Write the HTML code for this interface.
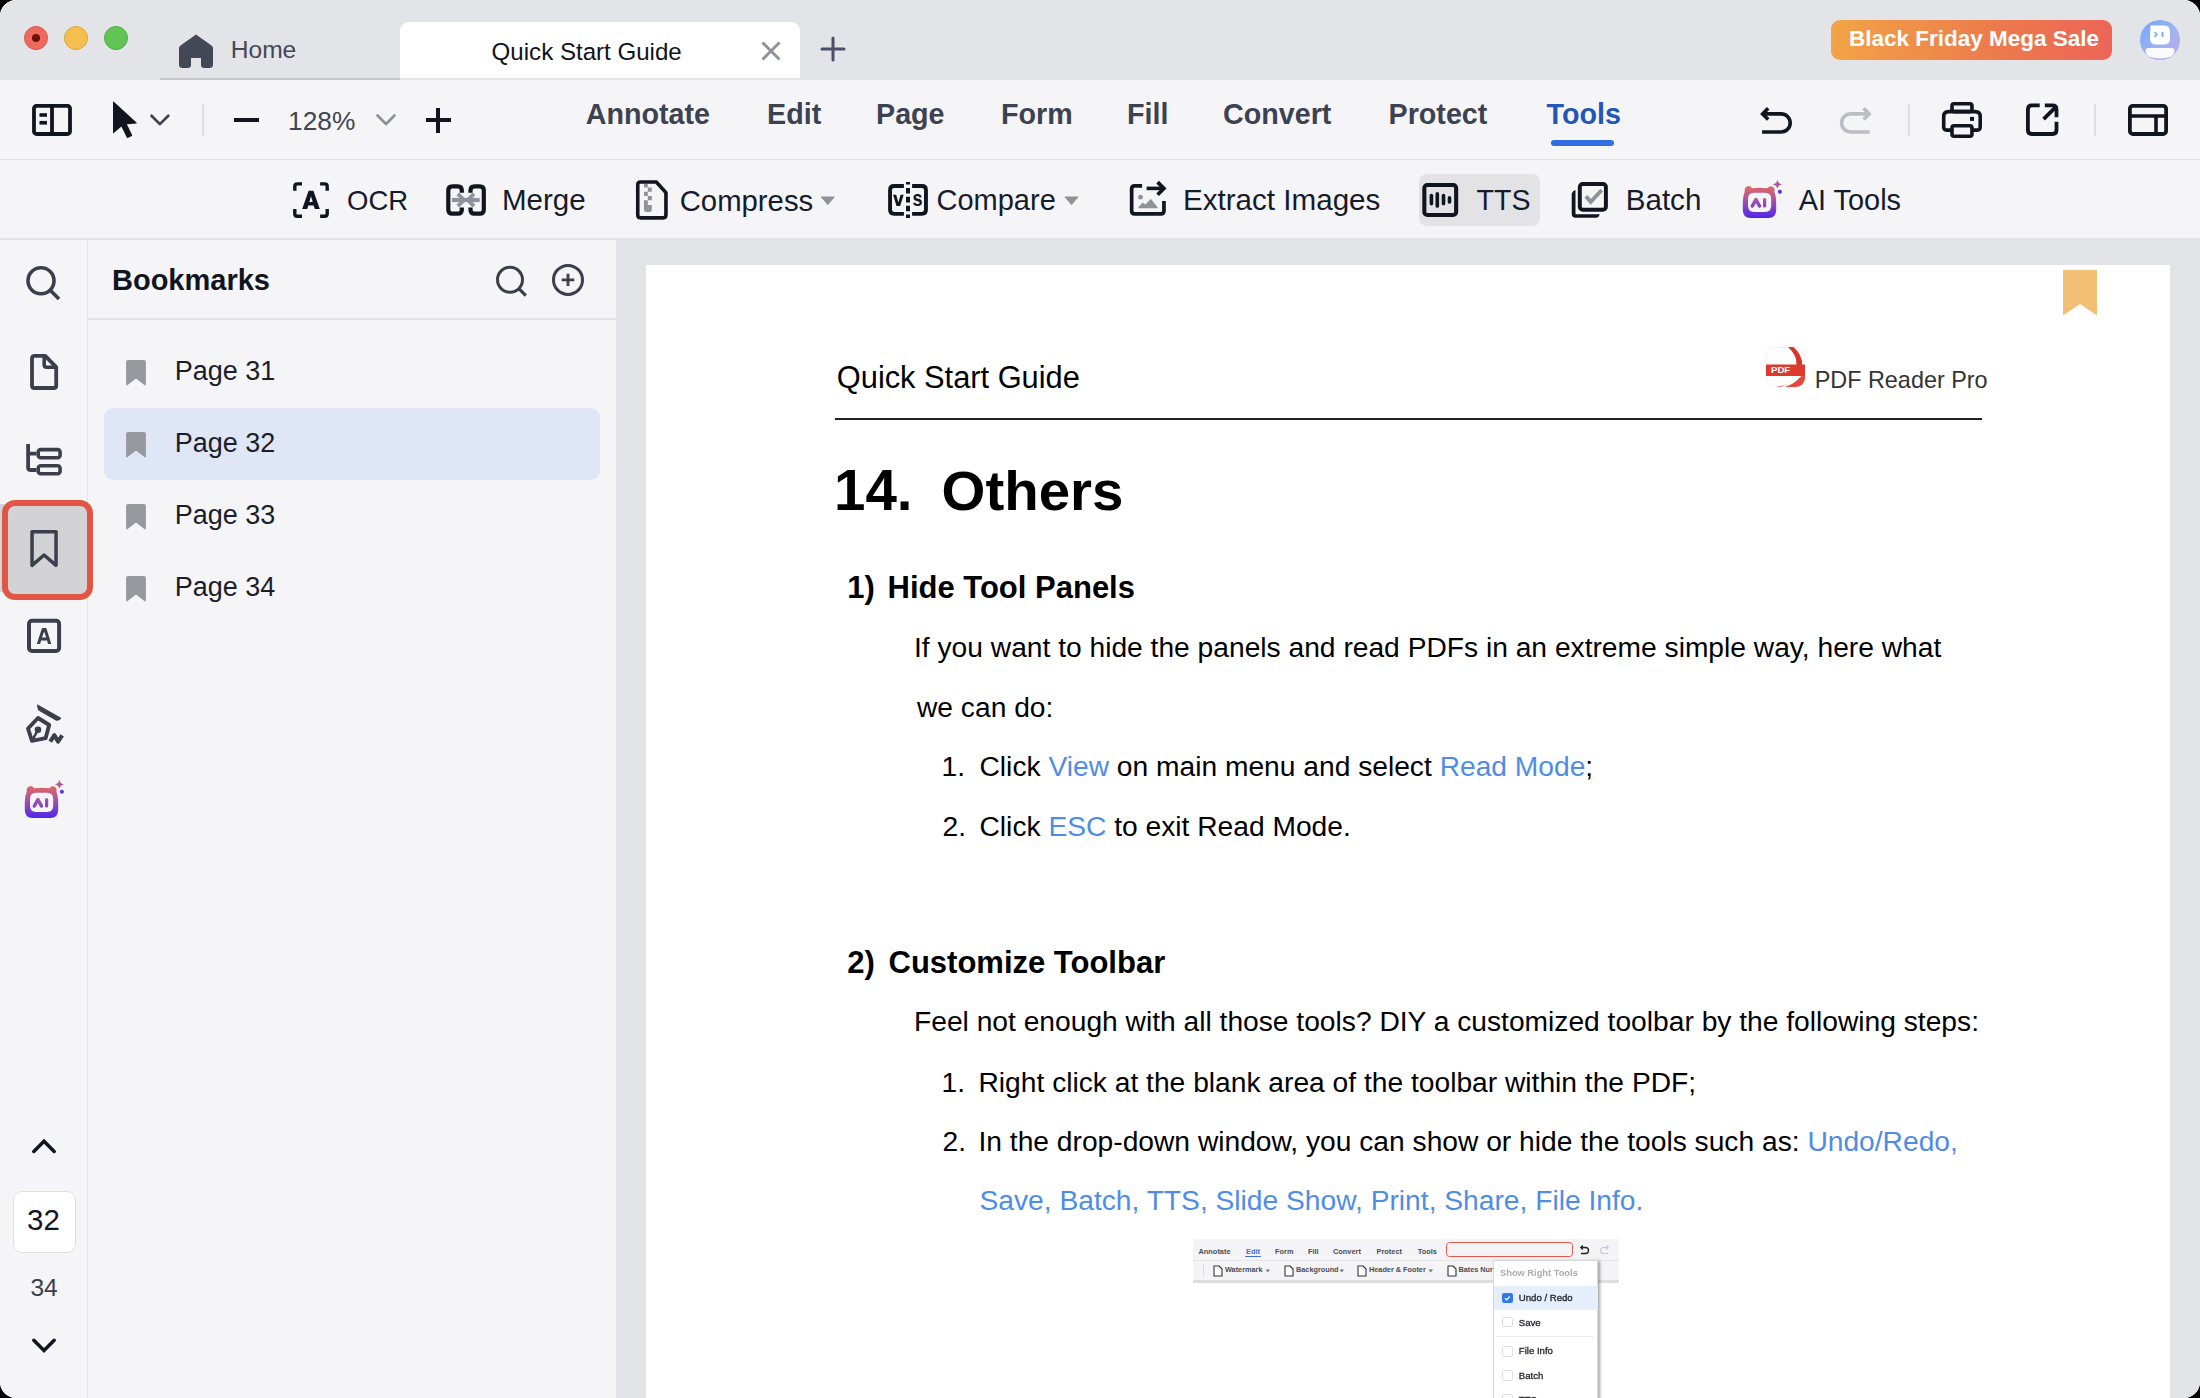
<!DOCTYPE html>
<html><head><meta charset="utf-8"><style>
html,body{margin:0;padding:0;background:#000;width:2200px;height:1398px;overflow:hidden}
#win{position:absolute;left:0;top:0;width:2200px;height:1398px;border-radius:16px;overflow:hidden;background:#f5f5f8;font-family:"Liberation Sans",sans-serif}
.t{position:absolute;white-space:pre;line-height:1;font-family:"Liberation Sans",sans-serif}
svg{overflow:visible}
</style></head><body><div id="win">
<div style="position:absolute;left:0px;top:0px;width:2200px;height:80px;background:#e3e4e7"></div>
<div style="position:absolute;left:24px;top:26px;width:24px;height:24px;border-radius:50%;background:#ee6a5e;box-sizing:border-box;border:1px solid #d9574b"></div>
<div style="position:absolute;left:64px;top:26px;width:24px;height:24px;border-radius:50%;background:#f5bf4f;box-sizing:border-box;border:1px solid #dba53a"></div>
<div style="position:absolute;left:104px;top:26px;width:24px;height:24px;border-radius:50%;background:#61c454;box-sizing:border-box;border:1px solid #4fae43"></div>
<div style="position:absolute;left:32px;top:34px;width:8px;height:8px;border-radius:50%;background:#6e1009"></div>
<div style="position:absolute;left:160px;top:78px;width:240px;height:2px;background:#c6c7cb"></div>
<svg style="position:absolute;left:179px;top:34px;" width="34" height="34" viewBox="0 0 34 34"><path d="M17 0.5 L32.5 11.5 Q34 12.6 34 14.5 V30.5 Q34 34 30.5 34 H25.5 Q22 34 22 31 V24 H12 V31 Q12 34 8.5 34 H3.5 Q0 34 0 30.5 V14.5 Q0 12.6 1.5 11.5 Z" fill="#434857"/></svg>
<div style="position:absolute;left:400px;top:22px;width:400px;height:56px;background:#fff;border-radius:9px 9px 0 0"></div>
<div style="position:absolute;left:400px;top:78px;width:400px;height:2px;background:#e6e6e9"></div>
<svg style="position:absolute;left:760px;top:40px;" width="22" height="22" viewBox="0 0 22 22"><path d="M2.5 2.5 L19.5 19.5 M19.5 2.5 L2.5 19.5" stroke="#8e9297" stroke-width="2.9"/></svg>
<svg style="position:absolute;left:819px;top:35px;" width="28" height="28" viewBox="0 0 28 28"><path d="M14 3 V25 M3 14 H25" stroke="#4b506a" stroke-width="3" stroke-linecap="round"/></svg>
<div style="position:absolute;left:1831px;top:20px;width:281px;height:40px;border-radius:9px;background:linear-gradient(90deg,#f2a446,#ec7a4c 60%,#ec6558)"></div>
<div style="position:absolute;left:2140px;top:20px;width:40px;height:40px;border-radius:50%;background:linear-gradient(135deg,#6ea8f6,#9fb2f2 55%,#c3a6ee)"></div>
<svg style="position:absolute;left:2140px;top:20px;" width="40" height="40" viewBox="0 0 40 40"><path d="M10.5 5.5 H24 Q30 5.5 30 11.5 V18.5 Q30 24.5 24 24.5 H16 Q10 24.5 10 18.5 Z" fill="#fff"/><path d="M14.5 12 L17 14.5 L14.5 17" fill="none" stroke="#7aa6f2" stroke-width="1.6"/><rect x="21.5" y="12" width="2" height="5" rx="1" fill="#7aa6f2"/><path d="M8 28 H32 Q34.5 28 34.5 31 Q34.5 38 20 38.5 Q5.5 38 5.5 31 Q5.5 28 8 28 Z" fill="#fff" opacity="0.95"/></svg>
<div style="position:absolute;left:0px;top:80px;width:2200px;height:79px;background:#f5f5f8"></div>
<div style="position:absolute;left:0px;top:159px;width:2200px;height:1px;background:#e1e2e5"></div>
<svg style="position:absolute;left:25px;top:95px;" width="50" height="50" viewBox="0 0 50 50"><rect x="9" y="10.8" width="36" height="28.2" rx="2.5" fill="none" stroke="#11151f" stroke-width="3.8"/><rect x="25.1" y="10" width="3.8" height="30" fill="#11151f"/><rect x="14.5" y="18.2" width="7.5" height="3.6" fill="#11151f"/><rect x="14.5" y="25.9" width="7.5" height="3.7" fill="#11151f"/></svg>
<svg style="position:absolute;left:25px;top:95px;" width="150" height="50" viewBox="0 0 150 50"><path d="M88 7 V37.6 Q88 38.5 88.8 37.9 L96.4 31.6 L101.8 42.6 Q102.1 43.2 102.7 42.9 L106.9 40.9 Q107.4 40.6 107.1 40 L101.9 29.3 L111.3 28.4 Q112.3 28.2 111.5 27.5 L88.6 6.6 Q88 6.2 88 7 Z" fill="#11151f"/><path d="M126.5 20.7 L134.9 29.1 L143.3 20.7" fill="none" stroke="#3d4250" stroke-width="2.7" stroke-linecap="round" stroke-linejoin="round"/></svg>
<div style="position:absolute;left:202px;top:104px;width:2px;height:32px;background:#dcdde0"></div>
<div style="position:absolute;left:233.5px;top:118px;width:25px;height:4px;background:#11151f"></div>
<svg style="position:absolute;left:374px;top:111px;" width="24" height="18" viewBox="0 0 24 18"><path d="M3.5 4.5 L12 13 L20.5 4.5" fill="none" stroke="#8a8e96" stroke-width="2.6" stroke-linecap="round" stroke-linejoin="round"/></svg>
<div style="position:absolute;left:425.5px;top:118px;width:25px;height:4px;background:#11151f"></div>
<div style="position:absolute;left:436px;top:107.5px;width:4px;height:25px;background:#11151f"></div>
<div style="position:absolute;left:1551px;top:140px;width:63px;height:6px;background:#2f6fe3;border-radius:3px"></div>
<svg style="position:absolute;left:1750px;top:95px;" width="130" height="50" viewBox="0 0 130 50"><path d="M12.1 37 H31.15 A9.05 9.05 0 0 0 31.15 18.9 H13" fill="none" stroke="#11151f" stroke-width="3.6"/><path d="M18.2 13.3 L12.6 18.9 L18.2 24.5" fill="none" stroke="#11151f" stroke-width="3.6" stroke-linejoin="miter"/><path d="M119.7 37 H100.65 A9.05 9.05 0 0 1 100.65 18.9 H118.8" fill="none" stroke="#bcbec3" stroke-width="3.6"/><path d="M113.6 13.3 L119.2 18.9 L113.6 24.5" fill="none" stroke="#bcbec3" stroke-width="3.6"/></svg>
<div style="position:absolute;left:1908px;top:104px;width:2px;height:32px;background:#dcdde0"></div>
<svg style="position:absolute;left:1930px;top:95px;" width="250" height="50" viewBox="0 0 250 50"><rect x="22" y="8.8" width="19.95" height="7.8" rx="2" fill="none" stroke="#11151f" stroke-width="3.6"/><path d="M22 35.1 H16.7 Q13.7 35.1 13.7 32.1 V21.6 Q13.7 16.6 18.7 16.6 H45.2 Q50.2 16.6 50.2 21.6 V32.1 Q50.2 35.1 47.2 35.1 H42" fill="none" stroke="#11151f" stroke-width="3.6"/><rect x="22" y="30.8" width="19.95" height="10.4" rx="2" fill="none" stroke="#11151f" stroke-width="3.6"/><rect x="40" y="21.9" width="4" height="4" fill="#11151f"/><path d="M109.7 10.4 H101.9 Q97.9 10.4 97.9 14.4 V35 Q97.9 39 101.9 39 H122.5 Q126.5 39 126.5 35 V26.7" fill="none" stroke="#11151f" stroke-width="3.8"/><path d="M114.8 10.4 H122.5 Q126.5 10.4 126.5 14.4 V22.2" fill="none" stroke="#11151f" stroke-width="3.8"/><path d="M113.6 24.2 L125.4 12.4" stroke="#11151f" stroke-width="3.8"/><rect x="199.9" y="10.8" width="36.2" height="28.2" rx="3" fill="none" stroke="#11151f" stroke-width="3.8"/><path d="M200 21 H236 M226 21 V39" stroke="#11151f" stroke-width="3.6"/></svg>
<div style="position:absolute;left:2094px;top:104px;width:2px;height:32px;background:#dcdde0"></div>
<div style="position:absolute;left:0px;top:160px;width:2200px;height:78px;background:#f5f5f8"></div>
<div style="position:absolute;left:0px;top:238px;width:2200px;height:2px;background:#e1e2e5"></div>
<svg style="position:absolute;left:285px;top:175px;" width="210" height="50" viewBox="0 0 210 50"><path d="M9.8 15.75 V11.4 Q9.8 8.9 12.3 8.9 H17 M35.1 8.9 H39.7 Q42.2 8.9 42.2 11.4 V15.75 M42.2 33.9 V38.8 Q42.2 41.3 39.7 41.3 H35.1 M17 41.3 H12.3 Q9.8 41.3 9.8 38.8 V33.9" fill="none" stroke="#11151f" stroke-width="3.4"/><path fill-rule="evenodd" d="M17.2 33.9 L23.6 15.8 H28.4 L34.8 33.9 H29.8 L28.7 30.4 H23.3 L22.2 33.9 Z M24.3 26.9 H27.7 L26 21.2 Z" fill="#11151f"/><path d="M176.8 17.7 V15.3 Q176.8 11.3 172.8 11.3 H167.3 Q163.3 11.3 163.3 15.3 V34.7 Q163.3 38.7 167.3 38.7 H172.8 Q176.8 38.7 176.8 34.7 V32.5 M185.5 17.7 V15.3 Q185.5 11.3 189.5 11.3 H194.8 Q198.8 11.3 198.8 15.3 V34.7 Q198.8 38.7 194.8 38.7 H189.5 Q185.5 38.7 185.5 34.7 V32.5" fill="none" stroke="#11151f" stroke-width="4.2"/><path d="M167 25 H194.7" stroke="#8f9298" stroke-width="4.2"/><path d="M172.8 18.9 L179 25 L172.8 31.1 M189 18.9 L182.8 25 L189 31.1" fill="none" stroke="#8f9298" stroke-width="3.8"/></svg>
<svg style="position:absolute;left:625px;top:172px;" width="310" height="56" viewBox="0 0 310 56"><path d="M15.5 9.95 H31.3 L40.95 20.6 V43 Q40.95 45.85 38.1 45.85 H15.6 Q12.75 45.85 12.75 43 V12.8 Q12.75 9.95 15.5 9.95 Z" fill="none" stroke="#11151f" stroke-width="3.6" stroke-linejoin="round"/><path d="M19 12 h3.8 v3.5 h-3.8z M22.8 15.5 h4 v4.2 h-4z M19 19.7 h3.8 v4.3 h-3.8z M22.8 24 h4 v4.2 h-4z M19 28.2 h3.8 v4.8 h4 v4.4 q0 2.5 -2.5 2.5 h-2.8 q-2.5 0 -2.5 -2.5z" fill="#8f9298"/><path d="M196.4 24.6 H209.2 Q210 24.6 209.5 25.3 L203.4 32.6 Q202.8 33.2 202.2 32.6 L196.1 25.3 Q195.6 24.6 196.4 24.6 Z" fill="#8f9298"/></svg>
<svg style="position:absolute;left:884px;top:178px;" width="50" height="44" viewBox="0 0 50 44"><path d="M19.9 7.95 H10.05 Q6.05 7.95 6.05 11.95 V31.85 Q6.05 35.85 10.05 35.85 H19.9 M28.1 7.95 H37.95 Q41.95 7.95 41.95 11.95 V31.85 Q41.95 35.85 37.95 35.85 H28.1" fill="none" stroke="#11151f" stroke-width="3.9"/><path d="M24 3.9 V40" stroke="#11151f" stroke-width="4" stroke-dasharray="5.6 3.3" stroke-dashoffset="2.9"/><path d="M9.1 16.8 H12.2 L14.3 24.6 L16.6 16.8 H19.7 L16.1 27.9 H12.5 Z" fill="#11151f"/><text x="0" y="0" transform="translate(28.6 28.1) scale(0.82 1)" font-family="Liberation Sans" font-weight="bold" font-size="22" fill="#11151f">s</text></svg>
<svg style="position:absolute;left:1055px;top:172px;" width="30" height="56" viewBox="0 0 30 56"><path d="M10.1 24.6 H22.9 Q23.7 24.6 23.2 25.3 L17.1 32.6 Q16.5 33.2 15.9 32.6 L9.8 25.3 Q9.3 24.6 10.1 24.6 Z" fill="#8f9298"/></svg>
<svg style="position:absolute;left:1120px;top:172px;" width="60" height="56" viewBox="0 0 60 56"><path d="M22.1 13.95 H14.6 Q11.65 13.95 11.65 16.9 V39 Q11.65 41.95 14.6 41.95 H41 Q43.95 41.95 43.95 39 V29" fill="none" stroke="#11151f" stroke-width="3.7"/><path d="M26.6 16.4 H43" stroke="#11151f" stroke-width="3.6"/><path d="M37.6 10.1 L43.9 16.4 L37.6 22.7" fill="none" stroke="#11151f" stroke-width="3.7"/><circle cx="20.5" cy="25.2" r="2.4" fill="#8f9298"/><path d="M18.7 36.3 Q17.6 36.3 18.3 35.4 L22.5 30.5 L25.4 32.5 L30.4 27.3 Q30.8 26.9 31.2 27.3 L37.5 35.3 Q38.1 36.3 37 36.3 Z" fill="#8f9298"/></svg>
<div style="position:absolute;left:1418.6px;top:174px;width:121.4px;height:51.6px;background:#e3e3e6;border-radius:8px"></div>
<svg style="position:absolute;left:1415px;top:172px;" width="200" height="56" viewBox="0 0 200 56"><rect x="9.35" y="12.95" width="31.8" height="30" rx="3" fill="none" stroke="#11151f" stroke-width="4.1"/><path d="M16.4 23.6 V31.8 M22.3 21.8 V34.1 M28.5 23.6 V31.8 M34.5 25.8 V30" stroke="#11151f" stroke-width="3.6" stroke-linecap="round"/><path d="M156.7 21.4 Q157.6 18.7 160.5 18.1 V42.2 H184.9 Q184 45.2 181.4 45.8 H160.7 Q156.7 45.8 156.7 41.8 Z" fill="#11151f"/><rect x="164.8" y="11.9" width="26.1" height="25.8" rx="3" fill="none" stroke="#11151f" stroke-width="3.95"/><path d="M170.9 24.2 L175.7 29.8 L186.7 18.1" fill="none" stroke="#8f9298" stroke-width="3.8"/></svg>
<svg style="position:absolute;left:1735px;top:172px" width="50" height="50" viewBox="0 0 50 50"><defs><linearGradient id="aig1" x1="0" y1="14" x2="0" y2="46" gradientUnits="userSpaceOnUse"><stop offset="0" stop-color="#e2685c"/><stop offset="0.45" stop-color="#a352ad"/><stop offset="1" stop-color="#4d27ea"/></linearGradient><linearGradient id="aig1s" x1="0" y1="8" x2="0" y2="21" gradientUnits="userSpaceOnUse"><stop offset="0" stop-color="#d2607f"/><stop offset="1" stop-color="#5a30e6"/></linearGradient></defs><path fill-rule="evenodd" fill="url(#aig1)" d="M12.8 14.2 Q15.5 13.5 17 16.2 Q24.5 15.4 32.5 16.2 Q34.2 13.5 37 14.4 Q40.5 15.8 39.4 19.6 Q41.2 24 41.2 30 V38 Q41.2 45.9 33.4 45.9 H15.6 Q7.8 45.9 7.8 38 V30 Q7.8 24 9.8 19.6 Q8.8 15.5 12.8 14.2 Z M19.2 20.8 H30 Q36.2 20.8 36.2 27 V33.8 Q36.2 40 30 40 H19.2 Q13 40 13 33.8 V27 Q13 20.8 19.2 20.8 Z"/><path d="M17.3 34 L20.9 27.6 L24.5 34" fill="none" stroke="url(#aig1)" stroke-width="3.5" stroke-linecap="round" stroke-linejoin="round"/><path d="M29.6 27.6 V34" stroke="url(#aig1)" stroke-width="3.2" stroke-linecap="round"/><path d="M42.4 7.8 Q43 11.8 47 12.4 Q43 13 42.4 16.8 Q41.8 13 37.8 12.4 Q41.8 11.8 42.4 7.8 Z" fill="#b05a9c"/><circle cx="44.9" cy="19.8" r="2" fill="#5a30e6"/></svg>
<div style="position:absolute;left:88px;top:240px;width:528px;height:1158px;background:#f5f5f8"></div>
<div style="position:absolute;left:88px;top:318px;width:528px;height:2px;background:#e2e3e6"></div>
<div style="position:absolute;left:0px;top:240px;width:87px;height:1158px;background:#f5f5f8"></div>
<div style="position:absolute;left:86.5px;top:240px;width:1.3px;height:1158px;background:#e2e3e6"></div>
<svg style="position:absolute;left:15px;top:255px;" width="60" height="230" viewBox="0 0 60 230"><circle cx="26" cy="25.75" r="13" fill="none" stroke="#3b3f4c" stroke-width="3.6"/><path d="M35.3 35.3 L44 44" stroke="#3b3f4c" stroke-width="3.6"/><path d="M17 103.5 Q17 100.9 19.6 100.9 H30.2 L41.2 112.2 V130.4 Q41.2 133 38.6 133 H19.6 Q17 133 17 130.4 Z" fill="none" stroke="#3b3f4c" stroke-width="3.8" stroke-linejoin="round"/><path d="M29.2 101 V109.8 Q29.2 112.2 31.6 112.2 H41" fill="none" stroke="#3b3f4c" stroke-width="3.6"/><path d="M13.1 188.9 V212.8 Q13.1 215 15.3 215 H21.4 M13.1 198.7 H21.4" fill="none" stroke="#3b3f4c" stroke-width="3.8"/><rect x="23.2" y="194.6" width="21.9" height="8.1" rx="2.5" fill="none" stroke="#3b3f4c" stroke-width="3.6"/><rect x="23.2" y="210.8" width="21.9" height="7.9" rx="2.5" fill="none" stroke="#3b3f4c" stroke-width="3.6"/></svg>
<div style="position:absolute;left:0px;top:504px;width:20px;height:88px;background:#d3d3d6"></div>
<div style="position:absolute;left:2.2px;top:499.6px;width:90.6px;height:100px;background:#d3d3d6;border:6px solid #e15545;border-radius:13px;box-sizing:border-box"></div>
<svg style="position:absolute;left:15px;top:520px;" width="60" height="310" viewBox="0 0 60 310"><path d="M17.05 11.75 H41.05 V45.3 L29.05 35 L17.05 45.3 Z" fill="none" stroke="#3b3f4c" stroke-width="3.5" stroke-linejoin="round"/></svg>
<svg style="position:absolute;left:20px;top:610px;" width="60" height="150" viewBox="0 0 60 150"><rect x="9" y="10.8" width="30.1" height="30.1" rx="3" fill="none" stroke="#3b3f4c" stroke-width="4"/><path fill-rule="evenodd" d="M16.8 34.1 L22 18 H26.3 L31.3 34.1 H28 L27.1 30.6 H21.1 L20.1 34.1 Z M22 27.6 H26.2 L24.1 21.4 Z" fill="#3b3f4c"/><path d="M17.2 94.2 L40.6 107.4 Q41.6 108 40.6 109.2 Q38.6 111.2 35.8 110.5 L20.2 101.6 Q17.2 99.9 17.2 97 Z" fill="#3b3f4c"/><path d="M8 118.5 L18 108 L29.2 115 L25.6 128.2 L12 130.8 Z" fill="none" stroke="#3b3f4c" stroke-width="3.9" stroke-linejoin="round"/><circle cx="18" cy="119.7" r="3.3" fill="#3b3f4c"/><path d="M18 119.7 L12.5 130" stroke="#3b3f4c" stroke-width="2.6"/><path d="M30.2 131.6 L34.4 125.2 L38 131.6 L42.2 125.4" fill="none" stroke="#3b3f4c" stroke-width="4.1" stroke-linejoin="round" stroke-linecap="butt"/></svg>
<svg style="position:absolute;left:17.2px;top:772.2px" width="50" height="50" viewBox="0 0 50 50"><defs><linearGradient id="aig2" x1="0" y1="14" x2="0" y2="46" gradientUnits="userSpaceOnUse"><stop offset="0" stop-color="#e2685c"/><stop offset="0.45" stop-color="#a352ad"/><stop offset="1" stop-color="#4d27ea"/></linearGradient><linearGradient id="aig2s" x1="0" y1="8" x2="0" y2="21" gradientUnits="userSpaceOnUse"><stop offset="0" stop-color="#d2607f"/><stop offset="1" stop-color="#5a30e6"/></linearGradient></defs><path fill-rule="evenodd" fill="url(#aig2)" d="M12.8 14.2 Q15.5 13.5 17 16.2 Q24.5 15.4 32.5 16.2 Q34.2 13.5 37 14.4 Q40.5 15.8 39.4 19.6 Q41.2 24 41.2 30 V38 Q41.2 45.9 33.4 45.9 H15.6 Q7.8 45.9 7.8 38 V30 Q7.8 24 9.8 19.6 Q8.8 15.5 12.8 14.2 Z M19.2 20.8 H30 Q36.2 20.8 36.2 27 V33.8 Q36.2 40 30 40 H19.2 Q13 40 13 33.8 V27 Q13 20.8 19.2 20.8 Z"/><path d="M17.3 34 L20.9 27.6 L24.5 34" fill="none" stroke="url(#aig2)" stroke-width="3.5" stroke-linecap="round" stroke-linejoin="round"/><path d="M29.6 27.6 V34" stroke="url(#aig2)" stroke-width="3.2" stroke-linecap="round"/><path d="M42.4 7.8 Q43 11.8 47 12.4 Q43 13 42.4 16.8 Q41.8 13 37.8 12.4 Q41.8 11.8 42.4 7.8 Z" fill="#b05a9c"/><circle cx="44.9" cy="19.8" r="2" fill="#5a30e6"/></svg>
<svg style="position:absolute;left:28px;top:1133px;" width="32" height="26" viewBox="0 0 32 26"><path d="M5.8 18.4 L16 8.2 L26.2 18.4" fill="none" stroke="#11151f" stroke-width="3.5" stroke-linecap="round"/></svg>
<div style="position:absolute;left:12.5px;top:1190.5px;width:63px;height:62.5px;background:#fff;border:1.5px solid #e0e0e4;border-radius:9px;box-sizing:border-box"></div>
<svg style="position:absolute;left:28px;top:1332px;" width="32" height="26" viewBox="0 0 32 26"><path d="M5.8 8.3 L16 18.5 L26.2 8.3" fill="none" stroke="#11151f" stroke-width="3.5" stroke-linecap="round"/></svg>
<svg style="position:absolute;left:485px;top:255px;" width="110" height="50" viewBox="0 0 110 50"><circle cx="25" cy="24.75" r="12.5" fill="none" stroke="#3b3f4c" stroke-width="3"/><path d="M33.9 33.7 L40.8 40.6" stroke="#3b3f4c" stroke-width="3.2"/><circle cx="83" cy="24.9" r="14.5" fill="none" stroke="#3b3f4c" stroke-width="3"/><path d="M83 18.75 V31 M76.75 24.9 H89.25" stroke="#3b3f4c" stroke-width="2.8"/></svg>
<div style="position:absolute;left:104px;top:408px;width:496px;height:72px;background:#dfe6f6;border-radius:9px"></div>
<svg style="position:absolute;left:115px;top:350px;" width="50" height="50" viewBox="0 0 50 50"><path d="M11.1 12 Q11.1 10 13.1 10 H28.9 Q30.9 10 30.9 12 V34.5 Q30.9 36.3 29.4 35.1 L21 28.6 L12.6 35.1 Q11.1 36.3 11.1 34.5 Z" fill="#95989d"/></svg>
<svg style="position:absolute;left:115px;top:422px;" width="50" height="50" viewBox="0 0 50 50"><path d="M11.1 12 Q11.1 10 13.1 10 H28.9 Q30.9 10 30.9 12 V34.5 Q30.9 36.3 29.4 35.1 L21 28.6 L12.6 35.1 Q11.1 36.3 11.1 34.5 Z" fill="#95989d"/></svg>
<svg style="position:absolute;left:115px;top:494px;" width="50" height="50" viewBox="0 0 50 50"><path d="M11.1 12 Q11.1 10 13.1 10 H28.9 Q30.9 10 30.9 12 V34.5 Q30.9 36.3 29.4 35.1 L21 28.6 L12.6 35.1 Q11.1 36.3 11.1 34.5 Z" fill="#95989d"/></svg>
<svg style="position:absolute;left:115px;top:566px;" width="50" height="50" viewBox="0 0 50 50"><path d="M11.1 12 Q11.1 10 13.1 10 H28.9 Q30.9 10 30.9 12 V34.5 Q30.9 36.3 29.4 35.1 L21 28.6 L12.6 35.1 Q11.1 36.3 11.1 34.5 Z" fill="#95989d"/></svg>
<div style="position:absolute;left:616px;top:240px;width:1584px;height:1158px;background:#e3e4e7"></div>
<div style="position:absolute;left:646px;top:265px;width:1524px;height:1140px;background:#fff"></div>
<svg style="position:absolute;left:2063px;top:270px;" width="34" height="46" viewBox="0 0 34 46"><path d="M0 0 H34 V45.5 L17 34 L0 45.5 Z" fill="#f2c074"/></svg>
<svg style="position:absolute;left:1766px;top:347px" width="40" height="40" viewBox="0 0 40 40"><defs><clipPath id="lg"><rect x="0" y="0" width="39" height="40" rx="9"/></clipPath></defs><rect x="0.3" y="0.3" width="38.4" height="39.4" rx="9" fill="#fff" stroke="#e6e6e6" stroke-width="0.6"/><g clip-path="url(#lg)"><path d="M22 0 H27.5 Q37 9 36 18 H30.5 Q31 8 22 0 Z" fill="#d8352b"/><rect x="0" y="17.5" width="39" height="11.5" fill="#dc3a2f"/><path d="M8 40.5 Q28 37 35.5 29 H39 V40.5 Z" fill="#e24a3f"/><path d="M13 40.5 Q27 35.5 32 29 H34.5 Q29 37.5 17 40.5 Z" fill="#fff"/></g><text x="5" y="26.3" font-family="Liberation Sans" font-weight="bold" font-size="9.6" fill="#fff">PDF</text></svg>
<div style="position:absolute;left:835px;top:418.2px;width:1147px;height:1.7px;background:#222"></div>
<div class="t" style="left:230.70px;top:38.38px;font-size:24.6px;font-weight:normal;color:#434857;">Home</div>
<div class="t" style="left:491.60px;top:39.50px;font-size:24.1px;font-weight:normal;color:#111318;">Quick Start Guide</div>
<div class="t" style="left:1848.90px;top:28.25px;font-size:22.5px;font-weight:bold;color:#fff;">Black Friday Mega Sale</div>
<div class="t" style="left:288.00px;top:107.94px;font-size:26.3px;font-weight:normal;color:#414552;">128%</div>
<div class="t" style="left:585.70px;top:99.91px;font-size:28.7px;font-weight:bold;color:#3d4250;">Annotate</div>
<div class="t" style="left:767.00px;top:99.91px;font-size:28.7px;font-weight:bold;color:#3d4250;">Edit</div>
<div class="t" style="left:876.00px;top:99.91px;font-size:28.7px;font-weight:bold;color:#3d4250;">Page</div>
<div class="t" style="left:1001.00px;top:99.91px;font-size:28.7px;font-weight:bold;color:#3d4250;">Form</div>
<div class="t" style="left:1127.00px;top:99.91px;font-size:28.7px;font-weight:bold;color:#3d4250;">Fill</div>
<div class="t" style="left:1223.00px;top:99.91px;font-size:28.7px;font-weight:bold;color:#3d4250;">Convert</div>
<div class="t" style="left:1388.50px;top:99.91px;font-size:28.7px;font-weight:bold;color:#3d4250;">Protect</div>
<div class="t" style="left:1546.60px;top:99.91px;font-size:28.7px;font-weight:bold;color:#2456b8;">Tools</div>
<div class="t" style="left:347.00px;top:187.02px;font-size:27.5px;font-weight:normal;color:#161b2b;">OCR</div>
<div class="t" style="left:502.00px;top:185.33px;font-size:29.5px;font-weight:normal;color:#161b2b;">Merge</div>
<div class="t" style="left:679.70px;top:185.50px;font-size:29.3px;font-weight:normal;color:#161b2b;">Compress</div>
<div class="t" style="left:936.50px;top:185.75px;font-size:29px;font-weight:normal;color:#161b2b;">Compare</div>
<div class="t" style="left:1183.00px;top:185.24px;font-size:29.6px;font-weight:normal;color:#161b2b;">Extract Images</div>
<div class="t" style="left:1476.60px;top:186.09px;font-size:28.6px;font-weight:normal;color:#161b2b;">TTS</div>
<div class="t" style="left:1625.70px;top:185.24px;font-size:29.6px;font-weight:normal;color:#161b2b;">Batch</div>
<div class="t" style="left:1798.80px;top:185.84px;font-size:28.9px;font-weight:normal;color:#161b2b;">AI Tools</div>
<div class="t" style="left:27.00px;top:1205.03px;font-size:29.5px;font-weight:normal;color:#11151f;">32</div>
<div class="t" style="left:30.40px;top:1275.76px;font-size:24.5px;font-weight:normal;color:#3b3f4c;">34</div>
<div class="t" style="left:112.00px;top:266.15px;font-size:29px;font-weight:bold;color:#11151f;">Bookmarks</div>
<div class="t" style="left:174.80px;top:358.14px;font-size:27px;font-weight:normal;color:#1a1e2a;">Page 31</div>
<div class="t" style="left:174.80px;top:430.14px;font-size:27px;font-weight:normal;color:#1a1e2a;">Page 32</div>
<div class="t" style="left:174.80px;top:502.14px;font-size:27px;font-weight:normal;color:#1a1e2a;">Page 33</div>
<div class="t" style="left:174.80px;top:574.14px;font-size:27px;font-weight:normal;color:#1a1e2a;">Page 34</div>
<div class="t" style="left:836.80px;top:362.93px;font-size:30.8px;font-weight:normal;color:#000;">Quick Start Guide</div>
<div class="t" style="left:1814.70px;top:368.89px;font-size:23.4px;font-weight:normal;color:#333333;">PDF Reader Pro</div>
<div class="t" style="left:834.00px;top:463.17px;font-size:56.5px;font-weight:bold;color:#000;">14.</div>
<div class="t" style="left:941.60px;top:463.26px;font-size:56.4px;font-weight:bold;color:#000;">Others</div>
<div class="t" style="left:847.20px;top:572.36px;font-size:31px;font-weight:bold;color:#000;">1)</div>
<div class="t" style="left:887.50px;top:572.36px;font-size:31px;font-weight:bold;color:#000;">Hide Tool Panels</div>
<div class="t" style="left:941.60px;top:752.13px;font-size:28.2px;font-weight:normal;color:#000;">1.</div>
<div class="t" style="left:942.60px;top:811.83px;font-size:28.2px;font-weight:normal;color:#000;">2.</div>
<div class="t" style="left:847.20px;top:946.76px;font-size:31px;font-weight:bold;color:#000;">2)</div>
<div class="t" style="left:888.50px;top:946.76px;font-size:31px;font-weight:bold;color:#000;">Customize Toolbar</div>
<div class="t" style="left:941.60px;top:1067.53px;font-size:28.2px;font-weight:normal;color:#000;">1.</div>
<div class="t" style="left:942.60px;top:1126.63px;font-size:28.2px;font-weight:normal;color:#000;">2.</div>
<div class="t" style="left:914.00px;top:632.73px;font-size:28.2px"><span style="color:#000">If you want to hide the panels and read PDFs in an extreme simple way, here what</span></div>
<div class="t" style="left:917.00px;top:692.53px;font-size:28.2px"><span style="color:#000">we can do:</span></div>
<div class="t" style="left:979.50px;top:752.13px;font-size:28.2px"><span style="color:#000">Click </span><span style="color:#4f8ce6">View</span><span style="color:#000"> on main menu and select </span><span style="color:#4f8ce6">Read Mode</span><span style="color:#000">;</span></div>
<div class="t" style="left:979.50px;top:811.83px;font-size:28.2px"><span style="color:#000">Click </span><span style="color:#4f8ce6">ESC</span><span style="color:#000"> to exit Read Mode.</span></div>
<div class="t" style="left:914.00px;top:1006.83px;font-size:28.2px"><span style="color:#000">Feel not enough with all those tools? DIY a customized toolbar by the following steps:</span></div>
<div class="t" style="left:978.50px;top:1067.53px;font-size:28.2px"><span style="color:#000">Right click at the blank area of the toolbar within the PDF;</span></div>
<div class="t" style="left:978.50px;top:1126.63px;font-size:28.2px"><span style="color:#000">In the drop-down window, you can show or hide the tools such as: </span><span style="color:#4f8ce6">Undo/Redo,</span></div>
<div class="t" style="left:979.50px;top:1186.13px;font-size:28.2px"><span style="color:#4f8ce6">Save, Batch, TTS, Slide Show, Print, Share, File Info.</span></div>
<div id="emb" style="position:absolute;left:0;top:0;width:2200px;height:1398px;filter:blur(0.35px)">
<div style="position:absolute;left:1193px;top:1239px;width:426px;height:20.5px;background:#f4f4f6"></div>
<div style="position:absolute;left:1193px;top:1259.5px;width:426px;height:1px;background:#e6e6e9"></div>
<div style="position:absolute;left:1193px;top:1260.5px;width:426px;height:19.5px;background:#f4f4f6"></div>
<div style="position:absolute;left:1193px;top:1280px;width:426px;height:3px;background:#dedee1"></div>
<div style="position:absolute;left:1245px;top:1255.5px;width:16px;height:1.6px;background:#3d6fd8;border-radius:1px"></div>
<div style="position:absolute;left:1445.8px;top:1242.1px;width:127px;height:15.4px;border:1.8px solid #e8574a;border-radius:3.5px;box-sizing:border-box"></div>
<svg style="position:absolute;left:1578px;top:1244px;" width="34" height="12" viewBox="0 0 34 12"><path d="M3 9.5 H7.5 A3 3 0 0 0 7.5 3.5 H3 M4.8 1.5 L2.8 3.5 L4.8 5.5" fill="none" stroke="#222" stroke-width="1.3"/><path d="M30 9.5 H25.5 A3 3 0 0 1 25.5 3.5 H30 M28.2 1.5 L30.2 3.5 L28.2 5.5" fill="none" stroke="#c8c9cc" stroke-width="1.1"/></svg>
<div style="position:absolute;left:1203px;top:1264px;width:0.8px;height:12px;background:#dcdcdf"></div>
<svg style="position:absolute;left:1213px;top:1264.5px;" width="10" height="12" viewBox="0 0 10 12"><path d="M1 1 H6 L9 4 V11 H1 Z" fill="#fff" stroke="#333" stroke-width="1.1" stroke-linejoin="round"/></svg>
<svg style="position:absolute;left:1265px;top:1269px;" width="6" height="4" viewBox="0 0 6 4"><path d="M0.5 0.5 H5 L2.75 3.5 Z" fill="#777"/></svg>
<svg style="position:absolute;left:1283.5px;top:1264.5px;" width="10" height="12" viewBox="0 0 10 12"><path d="M1 1 H6 L9 4 V11 H1 Z" fill="#fff" stroke="#333" stroke-width="1.1" stroke-linejoin="round"/></svg>
<svg style="position:absolute;left:1338.5px;top:1269px;" width="6" height="4" viewBox="0 0 6 4"><path d="M0.5 0.5 H5 L2.75 3.5 Z" fill="#777"/></svg>
<svg style="position:absolute;left:1357px;top:1264.5px;" width="10" height="12" viewBox="0 0 10 12"><path d="M1 1 H6 L9 4 V11 H1 Z" fill="#fff" stroke="#333" stroke-width="1.1" stroke-linejoin="round"/></svg>
<svg style="position:absolute;left:1428px;top:1269px;" width="6" height="4" viewBox="0 0 6 4"><path d="M0.5 0.5 H5 L2.75 3.5 Z" fill="#777"/></svg>
<svg style="position:absolute;left:1446.6px;top:1264.5px;" width="10" height="12" viewBox="0 0 10 12"><path d="M1 1 H6 L9 4 V11 H1 Z" fill="#fff" stroke="#333" stroke-width="1.1" stroke-linejoin="round"/></svg>
<div style="position:absolute;left:1492.9px;top:1259.6px;width:105.6px;height:140px;background:#fff;border:0.8px solid #d8d8db;box-shadow:2px 1px 3px rgba(0,0,0,0.35);box-sizing:border-box"></div>
<div class="t" style="left:1198.50px;top:1247.54px;font-size:7.4px;font-weight:bold;color:#4a4d55;">Annotate</div>
<div class="t" style="left:1246.00px;top:1247.54px;font-size:7.4px;font-weight:bold;color:#3d6fd8;">Edit</div>
<div class="t" style="left:1275.00px;top:1247.54px;font-size:7.4px;font-weight:bold;color:#4a4d55;">Form</div>
<div class="t" style="left:1308.00px;top:1247.54px;font-size:7.4px;font-weight:bold;color:#4a4d55;">Fill</div>
<div class="t" style="left:1333.00px;top:1247.54px;font-size:7.4px;font-weight:bold;color:#4a4d55;">Convert</div>
<div class="t" style="left:1376.50px;top:1247.54px;font-size:7.4px;font-weight:bold;color:#4a4d55;">Protect</div>
<div class="t" style="left:1417.70px;top:1247.54px;font-size:7.4px;font-weight:bold;color:#4a4d55;">Tools</div>
<div class="t" style="left:1225.00px;top:1266.42px;font-size:7.3px;font-weight:bold;color:#4a4d55;">Watermark</div>
<div class="t" style="left:1296.00px;top:1266.42px;font-size:7.3px;font-weight:bold;color:#4a4d55;">Background</div>
<div class="t" style="left:1369.00px;top:1266.42px;font-size:7.3px;font-weight:bold;color:#4a4d55;">Header &amp; Footer</div>
<div class="t" style="left:1458.40px;top:1266.42px;font-size:7.3px;font-weight:bold;color:#4a4d55;">Bates Nur</div>
<div style="position:absolute;left:1493.5px;top:1286px;width:104.5px;height:23.8px;background:#e5eefb"></div>
<div style="position:absolute;left:1502.4px;top:1292.6px;width:10.6px;height:10.3px;background:#3478e8;border-radius:2.2px"></div>
<svg style="position:absolute;left:1502.4px;top:1292.6px;" width="11" height="10" viewBox="0 0 11 10"><path d="M3 5.2 L4.7 6.8 L7.8 3.4" fill="none" stroke="#fff" stroke-width="1.2"/></svg>
<div style="position:absolute;left:1502.4px;top:1316.6px;width:10.6px;height:10.4px;background:#fff;border:0.8px solid #dcdde0;border-radius:2.2px;box-sizing:border-box"></div>
<div style="position:absolute;left:1502.4px;top:1346.3px;width:10.6px;height:10.4px;background:#fff;border:0.8px solid #dcdde0;border-radius:2.2px;box-sizing:border-box"></div>
<div style="position:absolute;left:1502.4px;top:1370.4px;width:10.6px;height:10.4px;background:#fff;border:0.8px solid #dcdde0;border-radius:2.2px;box-sizing:border-box"></div>
<div style="position:absolute;left:1502.4px;top:1394.4px;width:10.6px;height:10.4px;background:#fff;border:0.8px solid #dcdde0;border-radius:2.2px;box-sizing:border-box"></div>
<div style="position:absolute;left:1497.4px;top:1336.2px;width:96.2px;height:0.8px;background:#ececef"></div>
<div class="t" style="left:1500.00px;top:1268.63px;font-size:9.3px;font-weight:bold;color:#a9abb0;">Show Right Tools</div>
<div class="t" style="left:1518.80px;top:1292.97px;font-size:9.6px;font-weight:normal;color:#1f2128;-webkit-text-stroke:0.3px #1f2128">Undo / Redo</div>
<div class="t" style="left:1518.80px;top:1317.67px;font-size:9.6px;font-weight:normal;color:#1f2128;-webkit-text-stroke:0.3px #1f2128">Save</div>
<div class="t" style="left:1518.80px;top:1346.47px;font-size:9.6px;font-weight:normal;color:#1f2128;-webkit-text-stroke:0.3px #1f2128">File Info</div>
<div class="t" style="left:1518.80px;top:1370.87px;font-size:9.6px;font-weight:normal;color:#1f2128;-webkit-text-stroke:0.3px #1f2128">Batch</div>
<div class="t" style="left:1518.80px;top:1395.07px;font-size:9.6px;font-weight:normal;color:#1f2128;-webkit-text-stroke:0.3px #1f2128">TTS</div>
</div>
</div></body></html>
